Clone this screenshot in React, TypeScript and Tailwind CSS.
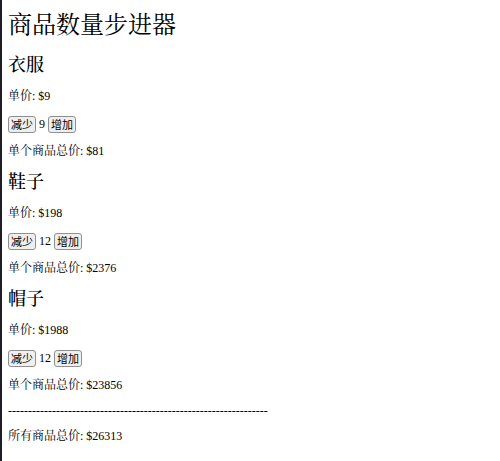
import React, { useState } from 'react';

type Item = { id: number; name: string; price: number; count: number };

const initialItems: Item[] = [
  { id: 1, name: '衣服', price: 9, count: 9 },
  { id: 2, name: '鞋子', price: 198, count: 12 },
  { id: 3, name: '帽子', price: 1988, count: 12 },
];

const StepButton = ({ label, onClick }: { label: string; onClick: () => void }) => (
  <button
    onClick={onClick}
    className="h-[17px] px-[2px] rounded-[3px] border border-[#8f8f8f] bg-[#efefef] text-[11px] leading-[15px] text-black font-['Noto_Sans_CJK_SC','Liberation_Sans',sans-serif]"
  >
    {label}
  </button>
);

const App = () => {
  const [items, setItems] = useState<Item[]>(initialItems);

  const change = (id: number, delta: number) => {
    setItems(prev =>
      prev.map(item =>
        item.id === id ? { ...item, count: Math.max(0, item.count + delta) } : item
      )
    );
  };

  const total = items.reduce((sum, item) => sum + item.price * item.count, 0);

  return (
    <div className="flex min-h-[461px] bg-white text-black font-['Liberation_Serif','Noto_Serif_CJK_SC','Noto_Sans_CJK_SC',serif]">
      <div className="w-[2px] shrink-0 bg-[#1e1e24]" />
      <div className="pl-[6px] pt-[11px]">
        <h1 className="text-[24px] leading-[28px]">商品数量步进器</h1>

        {items.map((item, i) => (
          <div key={item.id} className={i === 0 ? 'mt-[16px]' : 'mt-[13px]'}>
            <h2 className="text-[18px] leading-[21px] font-medium">{item.name}</h2>
            <p className="mt-[13px] text-[12px] leading-[15px]">单价: ${item.price}</p>
            <div className="mt-[11px] flex items-center h-[18px] gap-[3px] text-[12px]">
              <StepButton label="减少" onClick={() => change(item.id, -1)} />
              <span>{item.count}</span>
              <StepButton label="增加" onClick={() => change(item.id, 1)} />
            </div>
            <p className="mt-[11px] text-[12px] leading-[15px]">
              单个商品总价: ${item.price * item.count}
            </p>
          </div>
        ))}

        <p className="mt-[11px] text-[12px] leading-[15px] whitespace-nowrap">
          {'-'.repeat(65)}
        </p>
        <p className="mt-[10px] text-[12px] leading-[15px]">所有商品总价: ${total}</p>
      </div>
    </div>
  );
};

export default App;
